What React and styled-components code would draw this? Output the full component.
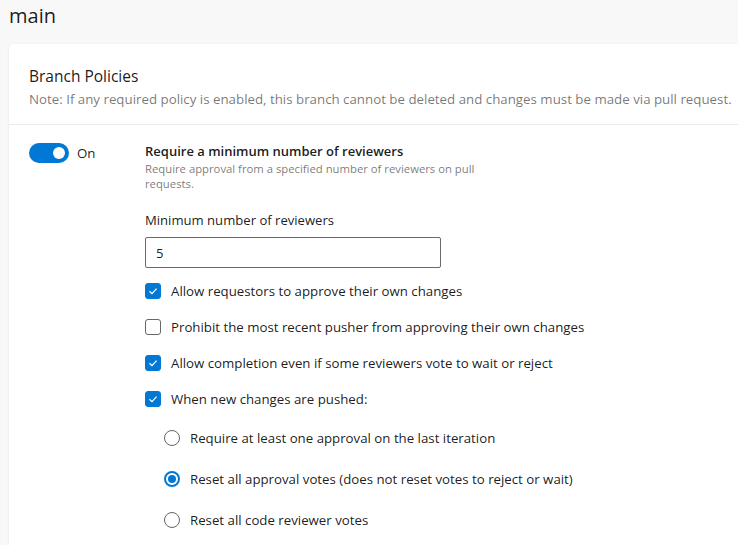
import React, { useState } from "react";
import styled, { createGlobalStyle } from "styled-components";

const GlobalStyle = createGlobalStyle`
  html, body {
    margin: 0;
    padding: 0;
    background: #f8f8f8;
    overflow: hidden;
    font-family: "Open Sans", "Noto Sans", sans-serif;
    color: rgba(0, 0, 0, 0.9);
  }
`;

const Page = styled.div`
  padding: 0 0 0 9px;
  overflow: hidden;
  height: 100vh;
`;

const PageTitle = styled.h1`
  margin: 0;
  padding: 3px 0 0 0;
  height: 41px;
  font-size: 20px;
  font-weight: 400;
  line-height: 26px;
`;

const Card = styled.div`
  background: #fff;
  border-radius: 4px;
  box-shadow: 0 1px 3px rgba(0, 0, 0, 0.08), 0 0 1px rgba(0, 0, 0, 0.06);
  margin-right: -40px;
  min-height: 520px;
`;

const CardHeader = styled.div`
  padding: 21px 20px 15px;
  border-bottom: 1px solid #eaeaea;
`;

const CardTitle = styled.h2`
  margin: 0;
  font-size: 15.5px;
  font-weight: 400;
  line-height: 22px;
`;

const Note = styled.p`
  margin: 2px 0 0;
  font-size: 13.3px;
  line-height: 20px;
  color: rgba(0, 0, 0, 0.55);
  white-space: nowrap;
`;

const PolicyRow = styled.div`
  display: flex;
  padding: 18px 20px 0;
`;

const ToggleCol = styled.div`
  width: 116px;
  flex: none;
  display: flex;
  align-items: flex-start;
  gap: 8px;
`;

const Track = styled.button`
  width: 40px;
  height: 20px;
  border-radius: 10px;
  border: none;
  background: ${(p) => (p.$on ? "#0078d4" : "#c8c8c8")};
  display: flex;
  align-items: center;
  justify-content: ${(p) => (p.$on ? "flex-end" : "flex-start")};
  padding: 0 4px;
  cursor: pointer;
`;

const Knob = styled.span`
  width: 12px;
  height: 12px;
  border-radius: 50%;
  background: #fff;
`;

const ToggleLabel = styled.span`
  font-size: 13.3px;
  line-height: 20px;
`;

const Body = styled.div`
  flex: 1;
  display: flex;
  flex-direction: column;
`;

const PolicyTitle = styled.div`
  font-size: 13px;
  font-weight: 600;
  line-height: 16px;
`;

const PolicyDesc = styled.div`
  margin-top: 2px;
  font-size: 11.3px;
  line-height: 15px;
  width: 345px;
  color: rgba(0, 0, 0, 0.55);
`;

const FieldLabel = styled.label`
  margin-top: 20px;
  font-size: 13.1px;
  line-height: 18px;
`;

const TextInput = styled.input`
  margin-top: 8px;
  box-sizing: border-box;
  width: 296px;
  height: 31px;
  border: 1px solid #6a6a6a;
  border-radius: 2px;
  padding: 0 10px;
  font-family: inherit;
  font-size: 13.1px;
  color: rgba(0, 0, 0, 0.9);
  outline: none;
`;

const OptionList = styled.div`
  margin-top: 5px;
  display: flex;
  flex-direction: column;
`;

const OptionRow = styled.label`
  display: flex;
  align-items: center;
  gap: 10px;
  height: ${(p) => (p.$radio ? "41px" : "36px")};
  padding-left: ${(p) => (p.$radio ? "19px" : "0")};
  font-size: 13.25px;
  cursor: pointer;
  white-space: nowrap;
`;

const Box = styled.span`
  box-sizing: border-box;
  width: 16px;
  height: 16px;
  flex: none;
  border-radius: 3px;
  border: 1px solid ${(p) => (p.$checked ? "#0078d4" : "#666")};
  background: ${(p) => (p.$checked ? "#0078d4" : "#fff")};
  display: flex;
  align-items: center;
  justify-content: center;
`;

const Radio = styled.span`
  box-sizing: border-box;
  width: 16px;
  height: 16px;
  flex: none;
  border-radius: 50%;
  border: ${(p) => (p.$checked ? "2px solid #0078d4" : "1px solid #666")};
  display: flex;
  align-items: center;
  justify-content: center;
  &::after {
    content: "";
    display: ${(p) => (p.$checked ? "block" : "none")};
    width: 8px;
    height: 8px;
    border-radius: 50%;
    background: #0078d4;
  }
`;

const Check = () => (
  <svg width="10" height="10" viewBox="0 0 10 10">
    <path d="M1.5 5.2 L4 7.6 L8.6 2.6" fill="none" stroke="#fff" strokeWidth="1.2" />
  </svg>
);

const checks = [
  ["Allow requestors to approve their own changes", true],
  ["Prohibit the most recent pusher from approving their own changes", false],
  ["Allow completion even if some reviewers vote to wait or reject", true],
  ["When new changes are pushed:", true],
];

const radios = [
  "Require at least one approval on the last iteration",
  "Reset all approval votes (does not reset votes to reject or wait)",
  "Reset all code reviewer votes",
];

export default function App() {
  const [on, setOn] = useState(true);
  const [count, setCount] = useState("5");
  const [boxes, setBoxes] = useState(checks.map((c) => c[1]));
  const [picked, setPicked] = useState(1);

  return (
    <Page>
      <GlobalStyle />
      <PageTitle>main</PageTitle>
      <Card>
        <CardHeader>
          <CardTitle>Branch Policies</CardTitle>
          <Note>
            Note: If any required policy is enabled, this branch cannot be deleted and changes must be made via pull request.
          </Note>
        </CardHeader>
        <PolicyRow>
          <ToggleCol>
            <Track $on={on} onClick={() => setOn(!on)}>
              <Knob />
            </Track>
            <ToggleLabel>{on ? "On" : "Off"}</ToggleLabel>
          </ToggleCol>
          <Body>
            <PolicyTitle>Require a minimum number of reviewers</PolicyTitle>
            <PolicyDesc>
              Require approval from a specified number of reviewers on pull requests.
            </PolicyDesc>
            <FieldLabel>Minimum number of reviewers</FieldLabel>
            <TextInput value={count} onChange={(e) => setCount(e.target.value)} />
            <OptionList>
              {checks.map(([text], i) => (
                <OptionRow
                  key={text}
                  onClick={() => setBoxes(boxes.map((b, j) => (j === i ? !b : b)))}
                >
                  <Box $checked={boxes[i]}>{boxes[i] && <Check />}</Box>
                  {text}
                </OptionRow>
              ))}
              {radios.map((text, i) => (
                <OptionRow $radio key={text} onClick={() => setPicked(i)}>
                  <Radio $checked={picked === i} />
                  {text}
                </OptionRow>
              ))}
            </OptionList>
          </Body>
        </PolicyRow>
      </Card>
    </Page>
  );
}
